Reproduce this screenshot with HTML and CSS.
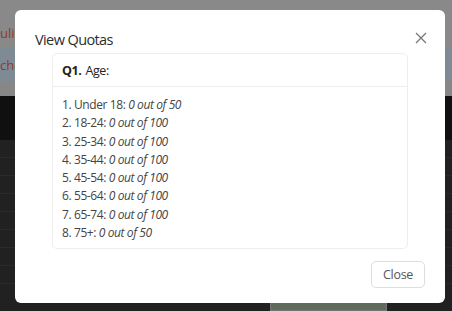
FILE: index.html
```html
<!DOCTYPE html>
<html>
<head>
<meta charset="utf-8">
<link rel="stylesheet" href="styles.css">
</head>
<body>
<div class="page">
  <div class="top-bar"><span class="red-text">ulin</span></div>
  <div class="info-strip"><span class="red-text">cho</span></div>
  <div class="gap-bar"></div>
  <div class="black-bar"></div>
  <div class="dark-area">
    <div class="row"></div><div class="row"></div><div class="row"></div><div class="row"></div>
    <div class="row"></div><div class="row"></div><div class="row"></div><div class="row"></div>
    <div class="green-box"></div>
  </div>
</div>
<div class="modal">
  <div class="modal-header">
    <h2 class="modal-title">View Quotas</h2>
    <svg class="close-x" width="12" height="12" viewBox="0 0 12 12"><path d="M1 1L11 11M11 1L1 11" stroke="#777" stroke-width="1.3" fill="none"/></svg>
  </div>
  <div class="card">
    <div class="card-header"><b>Q1.</b> Age:</div>
    <div class="card-body">
      <div>1. Under 18: <i>0 out of 50</i></div>
      <div>2. 18-24: <i>0 out of 100</i></div>
      <div>3. 25-34: <i>0 out of 100</i></div>
      <div>4. 35-44: <i>0 out of 100</i></div>
      <div>5. 45-54: <i>0 out of 100</i></div>
      <div>6. 55-64: <i>0 out of 100</i></div>
      <div>7. 65-74: <i>0 out of 100</i></div>
      <div>8. 75+: <i>0 out of 50</i></div>
    </div>
  </div>
  <div class="modal-footer">
    <button class="btn-close">Close</button>
  </div>
</div>
</body>
</html>
```
FILE: styles.css
```css
* { box-sizing: border-box; }
html, body { margin: 0; padding: 0; }
body {
  width: 452px;
  height: 311px;
  overflow: hidden;
  font-family: "Open Sans", "Noto Sans", sans-serif;
  background: #222;
}
.page { width: 452px; height: 311px; display: flex; flex-direction: column; }
.top-bar {
  height: 48px;
  background: #898989;
  padding-top: 26px;
}
.red-text { color: #8c3b2e; font-size: 13px; line-height: 14px; display: block; }
.info-strip {
  height: 34px;
  background: #7f8b94;
  padding-top: 10px;
}
.gap-bar { height: 14px; background: #878787; }
.black-bar { height: 44px; background: #101010; }
.dark-area { flex: 1; background: #212121; position: relative; }
.row { height: 18px; border-bottom: 1px solid #2a2a2a; }
.green-box {
  position: absolute;
  left: 270px;
  bottom: 0;
  width: 117px;
  height: 10px;
  background: #5f6b5b;
  border: 1px solid #777;
}
.modal {
  position: absolute;
  left: 15px;
  top: 10px;
  width: 430px;
  height: 293px;
  background: #fff;
  border-radius: 6px;
  display: flex;
  flex-direction: column;
}
.modal-header {
  display: flex;
  justify-content: space-between;
  align-items: center;
  padding: 16px 18px 0 20px;
  height: 43px;
}
.modal-title {
  margin: 0;
  font-size: 14.5px;
  font-weight: 500;
  letter-spacing: -0.6px;
  color: #2e2e2e;
  line-height: 22px;
}
.close-x { margin-top: -4px; }
.card {
  margin: 0 37px 0 37px;
  border: 1px solid #eeeeee;
  border-radius: 5px;
  height: 196px;
}
.card-header {
  height: 33px;
  border-bottom: 1px solid #eeeeee;
  padding: 0 9px;
  display: flex;
  align-items: center;
  font-size: 12.5px;
  letter-spacing: -0.4px;
  color: #222;
}
.card-header b { font-weight: 700; margin-right: 4px; }
.card-body {
  padding: 9px 9px;
  font-size: 12px;
  letter-spacing: -0.4px;
  line-height: 18.3px;
  color: #444;
}
.card-body i { font-style: italic; }
.modal-footer {
  display: flex;
  justify-content: flex-end;
  padding: 12px 20px 0 0;
}
.btn-close {
  font-family: inherit;
  font-size: 12.5px;
  letter-spacing: -0.3px;
  color: #555;
  background: #fff;
  border: 1px solid #dddddd;
  border-radius: 5px;
  width: 54px;
  height: 27px;
  padding: 0;
}
```
